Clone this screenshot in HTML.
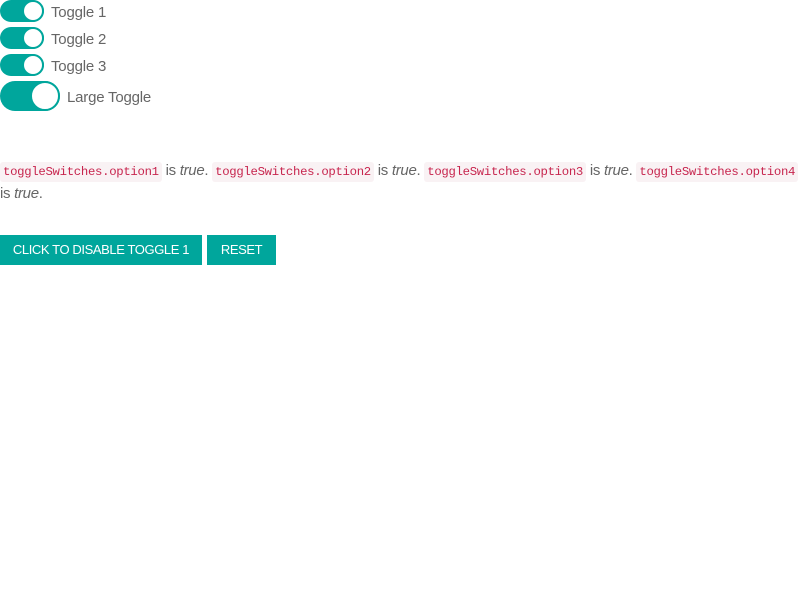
<!DOCTYPE html>
<html><head><style>
body{margin:0;background:#fff;font-family:"Liberation Sans",sans-serif;color:#666;}
.t{position:absolute;left:0;background:#00a69c;border-radius:12px;}
.k{position:absolute;background:#fff;border-radius:50%;border:2px solid #00a69c;box-sizing:border-box;}
.l{position:absolute;font-size:15px;color:#666;letter-spacing:-0.2px;}
code{font-family:"Liberation Mono",monospace;font-size:12.3px;color:#c7254e;background:#f9f2f4;padding:3px 3px;border-radius:3px;}
.p{position:absolute;left:0;top:160px;width:800px;font-size:15px;line-height:22px;letter-spacing:-0.3px;}
.b{position:absolute;top:235px;height:30px;background:#00a69c;color:#fff;font-size:13px;line-height:30px;text-align:center;letter-spacing:-0.4px;}
</style></head><body>
<div class="t" style="top:0;width:44px;height:22px"><div class="k" style="left:22px;top:0;width:22px;height:22px"></div></div>
<div class="l" style="left:51px;top:4px">Toggle 1</div>
<div class="t" style="top:27px;width:44px;height:22px"><div class="k" style="left:22px;top:0;width:22px;height:22px"></div></div>
<div class="l" style="left:51px;top:31px">Toggle 2</div>
<div class="t" style="top:54px;width:44px;height:22px"><div class="k" style="left:22px;top:0;width:22px;height:22px"></div></div>
<div class="l" style="left:51px;top:58px">Toggle 3</div>
<div class="t" style="top:81px;width:60px;height:30px;border-radius:15px"><div class="k" style="left:30px;top:0;width:30px;height:30px"></div></div>
<div class="l" style="left:67px;top:89px">Large Toggle</div>
<div class="p"><code>toggleSwitches.option1</code> is <i>true</i>. <code>toggleSwitches.option2</code> is <i>true</i>. <code>toggleSwitches.option3</code> is <i>true</i>. <code>toggleSwitches.option4</code><br>is <i>true</i>.</div>
<div class="b" style="left:0;width:202px">CLICK TO DISABLE TOGGLE 1</div>
<div class="b" style="left:207px;width:69px">RESET</div>
</body></html>
